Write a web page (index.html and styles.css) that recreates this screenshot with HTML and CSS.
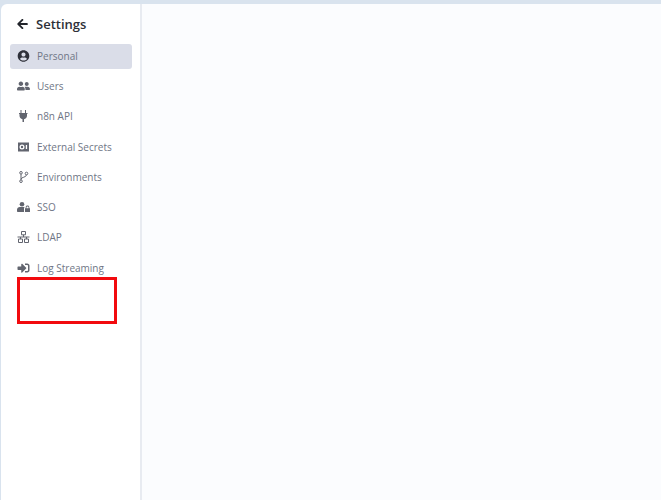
FILE: index.html
```html
<!DOCTYPE html>
<html lang="en">
<head>
<meta charset="utf-8">
<title>Settings</title>
<link rel="stylesheet" href="styles.css">
</head>
<body>
<div class="app">
  <aside class="sidebar">
    <div class="header">
      <svg class="back" viewBox="0 0 448 512"><path d="M257.500 445.100l-22.200 22.200c-9.400 9.400-24.600 9.400-33.900 0L7 273c-9.400-9.400-9.400-24.600 0-33.900L201.400 44.700c9.400-9.400 24.600-9.400 33.900 0l22.200 22.200c9.500 9.500 9.300 25-.4 34.300L136.600 216H424c13.300 0 24 10.700 24 24v32c0 13.300-10.700 24-24 24H136.600l120.500 114.800c9.800 9.300 10 24.800.4 34.300z"/></svg>
      <span class="title">Settings</span>
    </div>
    <nav class="menu">
      <a class="item active"><svg class="icon" viewBox="0 0 496 512"><path d="M248 8C111 8 0 119 0 256s111 248 248 248 248-111 248-248S385 8 248 8zm0 96c48.600 0 88 39.400 88 88s-39.400 88-88 88-88-39.400-88-88 39.400-88 88-88zm0 344c-58.700 0-111.300-26.600-146.500-68.200 18.800-35.400 55.600-59.800 98.500-59.800 2.400 0 4.800.4 7.100 1.100 13 4.200 26.600 6.900 40.900 6.900 14.300 0 28-2.700 40.900-6.900 2.300-.7 4.700-1.100 7.100-1.100 42.900 0 79.700 24.400 98.500 59.800C359.300 421.400 306.700 448 248 448z"/></svg><span>Personal</span></a>
      <a class="item"><svg class="icon" viewBox="0 0 640 512"><path d="M192 256c61.900 0 112-50.100 112-112S253.900 32 192 32 80 82.100 80 144s50.100 112 112 112zm76.800 32h-8.300c-20.800 10-43.900 16-68.500 16s-47.600-6-68.500-16h-8.300C51.600 288 0 339.600 0 403.200V432c0 26.500 21.500 48 48 48h288c26.500 0 48-21.500 48-48v-28.800c0-63.600-51.600-115.200-115.200-115.200zM480 256c53 0 96-43 96-96s-43-96-96-96-96 43-96 96 43 96 96 96zm48 32h-3.800c-13.900 4.800-28.600 8-44.200 8s-30.300-3.200-44.200-8H432c-20.400 0-39.200 5.900-55.700 15.400 24.400 26.300 39.700 61.200 39.700 99.800v38.400c0 2.200-.5 4.300-.6 6.400H592c26.500 0 48-21.500 48-48 0-61.900-50.100-112-112-112z"/></svg><span>Users</span></a>
      <a class="item"><svg class="icon" viewBox="0 0 13 12"><path d="M3.500 0h1v3h-1zM8 0h1v3H8zM2 3h8.500v1H10v1.800c0 1.800-1.300 3.100-3 3.400V12H5.500V9.200c-1.700-.3-3-1.600-3-3.400V4H2z"/></svg><span>n8n API</span></a>
      <a class="item"><svg class="icon" viewBox="0 0 13 12"><path fill-rule="evenodd" d="M1 1.500h11v9H1zm4 2a2.500 2.500 0 1 0 0 5 2.500 2.500 0 0 0 0-5zm0 1.300a1.200 1.200 0 1 1 0 2.400 1.200 1.200 0 0 1 0-2.400zM8.800 4v4h1.300V4z"/></svg><span>External Secrets</span></a>
      <a class="item"><svg class="icon line" viewBox="0 0 13 12"><circle cx="4" cy="1.800" r="1.300"/><circle cx="4" cy="10.200" r="1.300"/><circle cx="9.500" cy="2.500" r="1.300"/><path d="M4 3.100v5.800M9.500 3.800c0 2.700-5.500 2.200-5.500 4.400"/></svg><span>Environments</span></a>
      <a class="item"><svg class="icon" viewBox="0 0 13 12"><circle cx="5" cy="3.300" r="2.300"/><path d="M1 11c-.6 0-1-.4-1-1V8.700C0 7.200 1.300 6 2.800 6h4.300c.3 0 .5 0 .7.100-.5.300-.8.800-.8 1.400V11z"/><path fill-rule="evenodd" d="M8 7.200h.7V6.300c0-1 .8-1.700 1.800-1.700s1.800.7 1.800 1.700v.9h.7V11H8zm1.500 0h2V6.300c0-.5-.4-.9-1-.9s-1 .4-1 .9z"/></svg><span>SSO</span></a>
      <a class="item"><svg class="icon line" viewBox="0 0 13 12"><path d="M4.500.5h4v3.300h-4zM1.500 8h4v3.500h-4zM7.500 8h4v3.500h-4zM6.500 3.800v2.200M.5 6h12M3.500 6v2M9.500 6v2"/></svg><span>LDAP</span></a>
      <a class="item"><svg class="icon" viewBox="0 0 512 512"><path d="M416 448h-84c-6.600 0-12-5.400-12-12v-40c0-6.600 5.400-12 12-12h84c17.700 0 32-14.300 32-32V160c0-17.700-14.300-32-32-32h-84c-6.600 0-12-5.400-12-12V76c0-6.600 5.400-12 12-12h84c53 0 96 43 96 96v192c0 53-43 96-96 96zm-47-201L201 79c-15-15-41-4.500-41 17v96H24c-13.300 0-24 10.700-24 24v96c0 13.300 10.700 24 24 24h136v96c0 21.500 26 32 41 17l168-168c9.300-9.400 9.300-24.600 0-34z"/></svg><span>Log Streaming</span></a>
    </nav>
    <div class="annotation"></div>
  </aside>
  <main class="content"></main>
</div>
</body>
</html>
```
FILE: styles.css
```css
* { box-sizing: border-box; }
html, body { margin: 0; height: 100%; }
body {
  background: #d9e3ee;
  font-family: "Open Sans", sans-serif;
  overflow: hidden;
}
.app {
  display: flex;
  height: 100%;
  padding: 4px 0 0 1px;
}
.sidebar {
  position: relative;
  width: 141px;
  flex: none;
  background: #fff;
  border-right: 2px solid #e8ebf1;
  border-top-left-radius: 6px;
  padding: 0 8px 0 9px;
}
.header {
  display: flex;
  align-items: center;
  gap: 8px;
  height: 39.550px;
  padding: 0 0 0 7px;
}
.back { width: 11px; height: 12px; fill: #22252b; }
.title { font-size: 13px; font-weight: 600; color: #2d3038; }
.menu { display: flex; flex-direction: column; gap: 5px; }
.item {
  display: flex;
  align-items: center;
  height: 25.300px;
  border-radius: 3px;
  padding: 0 0 1px 7px;
  color: #6f7686;
  font-size: 10px;
  gap: 7px;
}
.item.active { background: #dadde8; }
.icon { width: 13px; height: 12px; flex: none; fill: #62656f; }
.icon.line { fill: none; stroke: #62656f; stroke-width: 1; }
.active .icon { fill: #2e3039; }
.content { flex: 1; background: #fbfcfe; }
.annotation {
  position: absolute;
  left: 16px;
  top: 273px;
  width: 100px;
  height: 47px;
  border: 3px solid #f20a0e;
}
```
